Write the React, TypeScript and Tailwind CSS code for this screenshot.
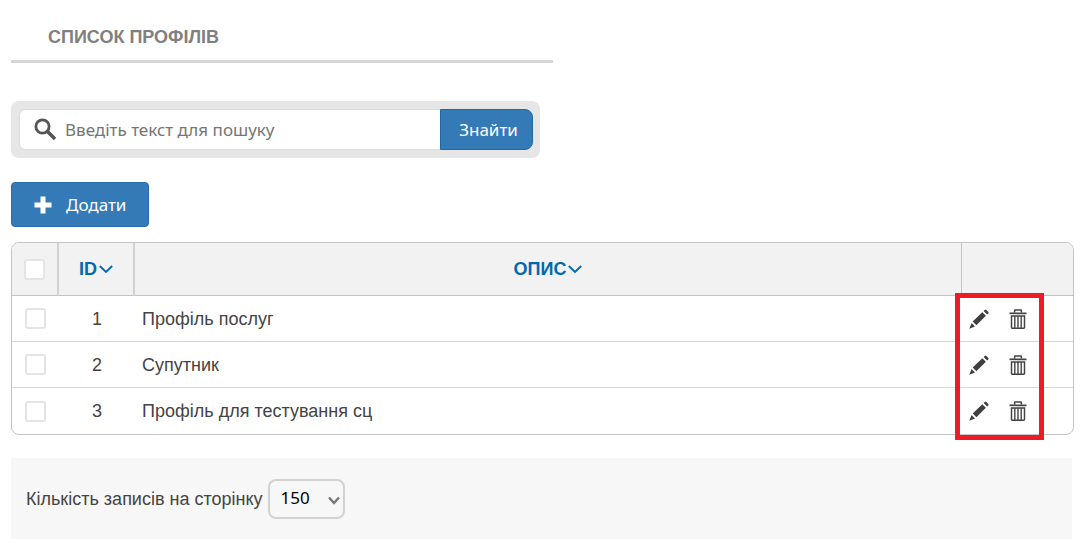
import { useState } from "react";

const profiles = [
  { id: 1, description: "Профіль послуг" },
  { id: 2, description: "Супутник" },
  { id: 3, description: "Профіль для тестування сц" },
];

const checkboxClass =
  "block mx-auto w-[21px] h-[21px] appearance-none rounded-[3px] border-2 border-[#e4e4e4] bg-white checked:bg-[#337ab7]";

function SearchIcon() {
  return (
    <svg className="w-6 h-6 shrink-0" viewBox="0 0 24 24" fill="none" stroke="#555" aria-hidden="true">
      <circle cx="8.500" cy="8.500" r="6.600" strokeWidth="2.800" />
      <path d="M13 13L21 21" strokeWidth="3.600" />
    </svg>
  );
}

function PlusIcon() {
  return (
    <svg className="w-[18px] h-[18px]" viewBox="0 0 18 18" fill="#fff" aria-hidden="true">
      <path d="M6.500 .5h5v6h6v5h-6v6h-5v-6h-6v-5h6z" />
    </svg>
  );
}

function SortIcon() {
  return (
    <svg className="w-[14px] h-[10px]" viewBox="0 0 14 10" fill="none" stroke="#0068b1" strokeWidth="1.8" aria-hidden="true">
      <path d="M.8 2L7 8l6.200-6" />
    </svg>
  );
}

function PencilIcon() {
  return (
    <svg className="w-5 h-5" viewBox="0 0 20 20" fill="#3f3f3f" aria-hidden="true">
      <path d="M15.800 .9q.8-.7 1.600 0l1.900 2q.7.8 0 1.500l-1.200 1.200-3.500-3.500z" />
      <path d="M13.300 3.200l3.600 3.600L7.400 16.200 3.700 12.500z" />
      <path d="M2.600 14l3.400 3.400L.3 19.700z" />
    </svg>
  );
}

function TrashIcon() {
  return (
    <svg className="w-[18px] h-5" viewBox="0 0 18 20" fill="none" stroke="#444" aria-hidden="true">
      <path d="M5.600 3.500V1.500q0-.5.5-.5h5.800q.5 0 .5.5v2" strokeWidth="1.500" />
      <path d="M.5 4.300h17" strokeWidth="1.700" />
      <path d="M2.500 7h13v11.500q0 .7-.7.7H3.200q-.7 0-.7-.7z" strokeWidth="1.500" />
      <path d="M5.800 7v12M9 7v12M12.200 7v12" strokeWidth="1.400" />
    </svg>
  );
}

export default function App() {
  const [query, setQuery] = useState("");
  const [selected, setSelected] = useState<number[]>([]);
  const [ascending, setAscending] = useState(true);
  const [pageSize, setPageSize] = useState("150");

  const rows = profiles.filter((p) => p.description.toLowerCase().includes(query.toLowerCase()));
  if (!ascending) rows.reverse();

  const toggle = (id: number) => {
    setSelected(selected.includes(id) ? selected.filter((s) => s !== id) : [...selected, id]);
  };

  return (
    <main className="bg-white pl-[11px] pr-2 pt-[23px] text-[#444] font-['Liberation_Sans',Arial,sans-serif]">
      <h1 className="max-w-[542px] border-b-3 border-[#d6d6d6] pl-[37px] pb-[9px] text-lg font-bold text-[#808080]">
        СПИСОК ПРОФІЛІВ
      </h1>

      <form
        className="mt-[38px] flex max-w-[529px] rounded-lg bg-[#e6e6e6] p-2 pr-[7px] text-[17px] font-['Noto_Sans',sans-serif]"
        onSubmit={(e) => e.preventDefault()}
      >
        <label className="flex h-[41px] min-w-0 flex-1 items-center gap-[7px] rounded-l-md border border-r-0 border-[#ddd] bg-white pl-3.5">
          <SearchIcon />
          <input
            type="text"
            aria-label="Пошук"
            placeholder="Введіть текст для пошуку"
            value={query}
            onChange={(e) => setQuery(e.target.value)}
            className="min-w-0 flex-1 outline-none placeholder:text-[#757575]"
          />
        </label>
        <button type="submit" className="w-[93px] rounded-r-lg border border-[#2268a2] bg-[#337ab7] pl-1 text-white">
          Знайти
        </button>
      </form>

      <button
        type="button"
        className="mt-6 flex h-[45px] items-center gap-3.5 rounded border border-[#2a6da8] bg-[#337ab7] px-[22px] text-[17px] text-white font-['Noto_Sans',sans-serif]"
      >
        <PlusIcon />
        Додати
      </button>

      <div className="relative mt-[15px]">
        <div className="overflow-hidden rounded-lg border border-[#c4c4c4]">
          <table className="w-full table-fixed border-separate border-spacing-0 text-lg">
            <thead>
              <tr className="h-[53px] bg-[#f2f2f2] text-[#0068b1]">
                <th className="w-[47px] border-r-2 border-b border-r-[#d2d2d2] border-b-[#c4c4c4]">
                  <input
                    type="checkbox"
                    aria-label="Вибрати всі"
                    className={checkboxClass}
                    checked={selected.length === profiles.length}
                    onChange={(e) => setSelected(e.target.checked ? profiles.map((p) => p.id) : [])}
                  />
                </th>
                <th className="w-[76px] border-r-2 border-b border-r-[#d2d2d2] border-b-[#c4c4c4]">
                  <button type="button" className="inline-flex items-center gap-0.5" onClick={() => setAscending(!ascending)}>
                    ID
                    <SortIcon />
                  </button>
                </th>
                <th className="border-r border-b border-[#c4c4c4]">
                  <button type="button" className="inline-flex items-center gap-0.5">
                    ОПИС
                    <SortIcon />
                  </button>
                </th>
                <th className="w-[111px] border-b border-[#c4c4c4]" aria-label="Дії"></th>
              </tr>
            </thead>
            <tbody className="[&>tr:not(:last-child)>td]:border-b [&>tr:not(:last-child)>td]:border-[#d8d8d8]">
              {rows.map((profile) => (
                <tr key={profile.id} className="h-[46px]">
                  <td>
                    <input
                      type="checkbox"
                      aria-label={profile.description}
                      className={checkboxClass}
                      checked={selected.includes(profile.id)}
                      onChange={() => toggle(profile.id)}
                    />
                  </td>
                  <td className="text-center">{profile.id}</td>
                  <td className="pl-[7px]">{profile.description}</td>
                  <td>
                    <div className="flex items-center gap-5 pl-[7px]">
                      <button type="button" aria-label="Редагувати">
                        <PencilIcon />
                      </button>
                      <button type="button" aria-label="Видалити">
                        <TrashIcon />
                      </button>
                    </div>
                  </td>
                </tr>
              ))}
            </tbody>
          </table>
        </div>
        {/* frame around the row actions */}
        <div className="pointer-events-none absolute top-[51px] -bottom-[5px] right-[30px] w-[89px] border-5 border-[#ed1c24]" />
      </div>

      <div className="mt-[23px] mr-0.5 flex h-[81px] items-center gap-[5px] bg-[#f7f7f7] pl-[15px] text-lg">
        <label htmlFor="page-size">Кількість записів на сторінку</label>
        <div className="relative">
          <select
            id="page-size"
            value={pageSize}
            onChange={(e) => setPageSize(e.target.value)}
            className="h-10 w-[77px] appearance-none rounded-lg border-2 border-[#d2d2d2] pl-[11px] text-[17px] text-black font-['Noto_Sans',sans-serif]"
          >
            <option>50</option>
            <option>100</option>
            <option>150</option>
          </select>
          <svg
            className="pointer-events-none absolute right-[5px] top-[17px] h-2.5 w-3"
            viewBox="0 0 12 10"
            fill="none"
            stroke="#777"
            strokeWidth="2.400"
            aria-hidden="true"
          >
            <path d="M1 1.500L6 7l5-5.500" />
          </svg>
        </div>
      </div>
    </main>
  );
}
